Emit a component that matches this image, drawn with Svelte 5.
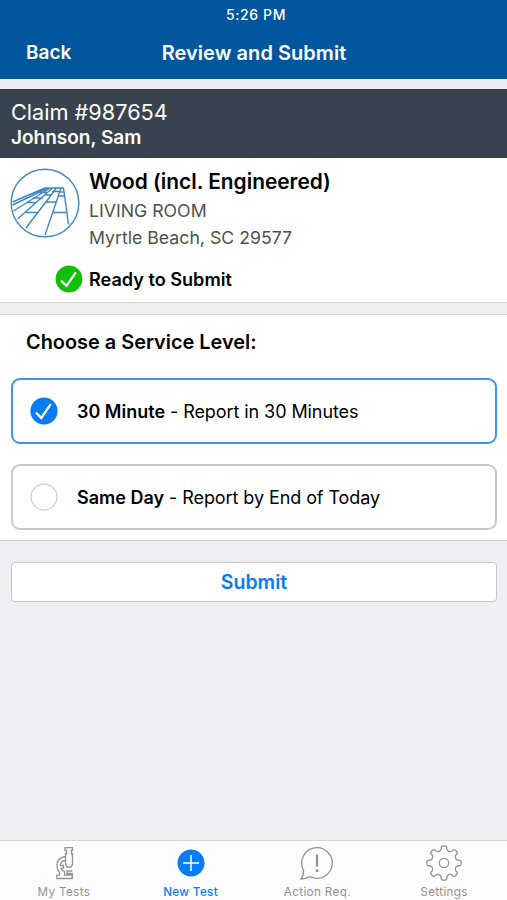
<script lang="ts">
  let selected = $state('30min');
  let activeTab = $state('new');

  const levels = [
    { id: '30min', name: '30 Minute', detail: 'Report in 30 Minutes' },
    { id: 'sameday', name: 'Same Day', detail: 'Report by End of Today' }
  ];

  const tabs = [
    { id: 'tests', label: 'My Tests' },
    { id: 'new', label: 'New Test' },
    { id: 'action', label: 'Action Req.' },
    { id: 'settings', label: 'Settings' }
  ];

  // Eight-tooth cog outline, centred on 0,0
  function cogPath() {
    const at = (r: number, deg: number) => {
      const a = (deg * Math.PI) / 180;
      return `${(r * Math.cos(a)).toFixed(2)} ${(r * Math.sin(a)).toFixed(2)}`;
    };
    let d = `M${at(12.6, -22.5)}`;
    for (let i = 0; i < 8; i++) {
      const c = i * 45;
      d += `Q${at(12.7, c - 14)} ${at(14.4, c - 11)}`;
      d += `Q${at(17.2, c - 10)} ${at(17.2, c - 4)}`;
      d += `L${at(17.2, c + 4)}`;
      d += `Q${at(17.2, c + 10)} ${at(14.4, c + 11)}`;
      d += `Q${at(12.7, c + 14)} ${at(12.6, c + 22.5)}`;
    }
    return d + 'Z';
  }
</script>

<div class="app">
  <header>
    <div class="status">5:26 PM</div>
    <nav class="navbar">
      <button class="back">Back</button>
      <h1>Review and Submit</h1>
    </nav>
  </header>

  <section class="claim">
    <div class="claim-number">Claim #987654</div>
    <div class="claim-name">Johnson, Sam</div>
  </section>

  <section class="summary">
    <div class="product">
      <svg class="wood" width="70" height="70" viewBox="0 0 70 70">
        <circle cx="35" cy="35" r="33.8" />
        <path d="M35 20H54M53.500 20L58.500 56.500M51 20L35 67M46.500 20L16 60M42.500 20L7.500 51M40 20L3.500 43M38 20L2.500 37M35 20L2.500 34M49.500 24H54.500M48 28H55M35 34H46M43 44.500H57M16 44.500H28M34 27H41M17 34.500H26M23 30H33M29 24.500H38M42 23.500H49" />
      </svg>
      <div class="info">
        <h2>Wood (incl. Engineered)</h2>
        <div class="room">LIVING ROOM</div>
        <div class="city">Myrtle Beach, SC 29577</div>
      </div>
    </div>
    <div class="ready">
      <svg width="28" height="28" viewBox="0 0 28 28">
        <circle cx="14" cy="14" r="13.4" fill="#13bd0b" />
        <path class="check" d="M6 15.700L11.500 20.800L20.900 7.300" />
      </svg>
      <span>Ready to Submit</span>
    </div>
  </section>

  <section class="service">
    <h3>Choose a Service Level:</h3>
    {#each levels as level}
      <button class="option" class:selected={selected === level.id} onclick={() => (selected = level.id)}>
        <svg width="28" height="28" viewBox="0 0 28 28">
          {#if selected === level.id}
            <circle cx="14" cy="14" r="13.6" fill="#087cf5" />
            <path class="check" d="M5.900 15.700L11.300 20.900L20.700 7.200" />
          {:else}
            <circle cx="14" cy="14" r="13" fill="#fff" stroke="#d2d2d4" stroke-width="1.3" />
          {/if}
        </svg>
        <span><b>{level.name}</b> - {level.detail}</span>
      </button>
    {/each}
  </section>

  <div class="actions">
    <button class="submit">Submit</button>
  </div>

  <footer>
    {#each tabs as tab}
      <button class="tab" class:active={activeTab === tab.id} onclick={() => (activeTab = tab.id)}>
        <svg width="38" height="38" viewBox="-19 -19 38 38">
          {#if tab.id === 'tests'}
            <path d="M1 -15.300H8.500V-12.700H7.500V-9H8.500V1L7 4H3L1.500 1V-9H2.500V-12.700H1ZM1.500 -6.500C-4.500 -5.500 -7.300 -1.500 -7.100 3C-7 6 -6 8 -4.500 9.500V12.200H-7.200V15.500H8.300V10.500H3V8H8.300M1.500 -2.800C-2.300 -1.800 -3.800 0.400 -3.700 2.500H-0.500V5.300H-3C-2.500 7.300 -1 8 0.500 8.200V12H8.300" />
          {:else if tab.id === 'new'}
            <circle r="13.5" fill="currentColor" stroke="none" />
            <path d="M-8 0H8M0 -8V8" stroke="#fff" stroke-width="1.5" />
          {:else if tab.id === 'action'}
            <path d="M-13.500 7.200A15.300 15.300 0 1 1 -7.200 13.500C-9.500 15 -12 16 -16 16.200C-14 13.500 -13.300 10.500 -13.500 7.200Z" />
            <path d="M0 -8.500V3.500" stroke-width="2.300" />
            <circle cy="7.700" r="1.500" fill="currentColor" stroke="none" />
          {:else}
            <path d={cogPath()} />
            <circle r="4.700" />
          {/if}
        </svg>
        <span>{tab.label}</span>
      </button>
    {/each}
  </footer>
</div>

<style>
  :global(body) {
    margin: 0;
  }

  .app {
    display: flex;
    flex-direction: column;
    height: 900px;
    background: #eeeef3;
    color: #000;
    font-family: Inter, 'Liberation Sans', sans-serif;
  }

  button {
    padding: 0;
    border: 0;
    background: none;
    color: inherit;
    font: inherit;
    cursor: pointer;
  }

  h1,
  h2,
  h3 {
    margin: 0;
    font-weight: 600;
  }

  header {
    height: 79px;
    background: #00569c;
    color: #fff;
  }

  .status {
    height: 27px;
    padding: 1px 0 0 5px;
    box-sizing: border-box;
    line-height: 27px;
    text-align: center;
    font-size: 14px;
    font-weight: 500;
    letter-spacing: 0.6px;
  }

  .navbar {
    display: grid;
    grid-template-columns: 1fr auto 1fr;
    align-items: center;
    height: 51px;
    padding: 0 26px;
  }

  .back {
    justify-self: start;
    font-size: 19px;
    font-weight: 600;
  }

  h1 {
    padding-left: 1px;
    font-size: 20px;
    letter-spacing: 0.04px;
  }

  .claim {
    box-sizing: border-box;
    height: 69px;
    margin-top: 10px;
    padding: 10px 11px 0;
    background: #39434f;
    color: #fff;
  }

  .claim-number {
    font-size: 21.7px;
    line-height: 26px;
  }

  .claim-name {
    font-size: 19px;
    font-weight: 600;
    line-height: 25px;
  }

  .summary {
    box-sizing: border-box;
    height: 145px;
    padding: 10px 10px 0;
    border-bottom: 1px solid #d6d6d9;
    background: #fff;
  }

  .product {
    display: flex;
    gap: 9px;
    height: 97px;
  }

  .wood {
    fill: none;
    stroke: #3f87c7;
    stroke-width: 1.4;
  }

  h2 {
    margin-bottom: 2px;
    font-size: 20.9px;
    line-height: 27px;
  }

  .room,
  .city {
    color: #505050;
    font-size: 17.7px;
    line-height: 27px;
  }

  .ready {
    display: flex;
    align-items: center;
    gap: 6px;
    padding-left: 45px;
    font-size: 18.1px;
    font-weight: 600;
  }

  .check {
    fill: none;
    stroke: #fff;
    stroke-width: 2.3;
  }

  .service {
    box-sizing: border-box;
    height: 227px;
    margin-top: 11px;
    padding: 0 10px 0 11px;
    border-top: 1px solid #d6d6d9;
    border-bottom: 1px solid #d0d0d3;
    background: #fff;
  }

  h3 {
    padding: 13px 15px 22px;
    font-size: 19.9px;
    line-height: 28px;
  }

  .option {
    display: flex;
    align-items: center;
    box-sizing: border-box;
    width: 100%;
    height: 66px;
    margin-bottom: 20px;
    padding-left: 17px;
    border: 2px solid #c9c9ca;
    border-radius: 9px;
    gap: 19px;
    font-size: 18px;
    letter-spacing: -0.08px;
  }

  .option.selected {
    border-color: #3e95e8;
  }

  b {
    font-weight: 600;
    letter-spacing: 0;
  }

  .actions {
    flex: 1;
    padding: 21px 10px 0 11px;
  }

  .submit {
    width: 100%;
    height: 40px;
    border: 1.5px solid #c6c6c9;
    border-radius: 4px;
    background: #fff;
    color: #087cf5;
    font-size: 19.5px;
    font-weight: 600;
  }

  footer {
    display: grid;
    grid-template-columns: repeat(4, 1fr);
    box-sizing: border-box;
    height: 60px;
    border-top: 1px solid #d5d5d8;
    background: #fdfdfd;
  }

  .tab {
    display: flex;
    flex-direction: column;
    align-items: center;
    padding: 3px 0 0 1px;
    color: #929292;
    font-size: 11.7px;
    letter-spacing: 0.35px;
  }

  .tab svg {
    fill: none;
    stroke: currentColor;
    stroke-width: 1.3;
  }

  .tab span {
    line-height: 20px;
  }

  .tab.active {
    color: #087cf5;
    font-weight: 500;
  }
</style>
